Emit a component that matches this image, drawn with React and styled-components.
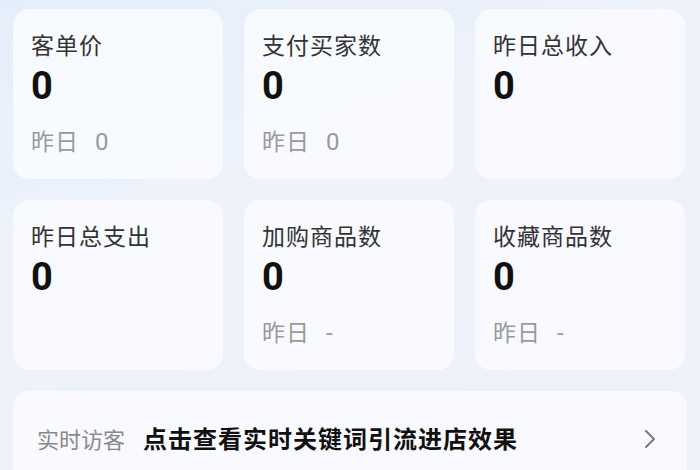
import React from 'react';
import styled, { createGlobalStyle } from 'styled-components';

const GlobalStyle = createGlobalStyle`
  html, body {
    margin: 0;
    padding: 0;
  }
  body {
    font-family: "Noto Sans CJK SC", "Noto Sans", sans-serif;
    background: #eef2fa;
  }
`;

const Page = styled.div`
  width: 700px;
  height: 470px;
  overflow: hidden;
  box-sizing: border-box;
  padding: 9px 13px 0 13px;
  background: linear-gradient(160deg, #e4eefb 0%, #edf2fb 35%, #eff1fa 100%);
`;

const Grid = styled.div`
  display: grid;
  grid-template-columns: repeat(3, 210px);
  grid-auto-rows: 170px;
  column-gap: 21px;
  row-gap: 21px;
`;

const Card = styled.div`
  background: rgba(249, 251, 255, 0.85);
  border-radius: 16px;
  padding: 21px 0 0 18px;
  box-sizing: border-box;
  display: flex;
  flex-direction: column;
`;

const Title = styled.div`
  font-size: 23px;
  line-height: 28px;
  color: #333;
  font-weight: 400;
  letter-spacing: 1px;
`;

const Value = styled.div`
  margin-top: 6px;
  font-family: Roboto, "Liberation Sans", sans-serif;
  font-size: 38px;
  line-height: 44px;
  font-weight: 700;
  color: #111;
`;

const Sub = styled.div`
  margin-top: 18px;
  font-size: 23px;
  line-height: 28px;
  color: #9a9a9a;
  letter-spacing: 1px;
  display: flex;
  align-items: baseline;
  gap: 16px;
  span:last-child {
    font-family: Roboto, "Liberation Sans", sans-serif;
    font-size: 24px;
  }
`;

const Banner = styled.div`
  margin-top: 21px;
  height: 100px;
  width: 674px;
  background: rgba(249, 251, 255, 0.9);
  border-radius: 16px;
  display: flex;
  align-items: flex-start;
  padding: 33px 30px 0 24px;
  box-sizing: border-box;
`;

const Label = styled.div`
  font-size: 22px;
  line-height: 28px;
  color: #8a8a8a;
  margin-right: 18px;
`;

const Link = styled.div`
  flex: 1;
  font-size: 24px;
  line-height: 28px;
  font-weight: 700;
  color: #111;
  letter-spacing: 1px;
`;

const Chevron = styled.svg`
  width: 14px;
  height: 20px;
  margin-top: 5px;
`;

const stats = [
  { title: '客单价', value: '0', sub: '0' },
  { title: '支付买家数', value: '0', sub: '0' },
  { title: '昨日总收入', value: '0' },
  { title: '昨日总支出', value: '0' },
  { title: '加购商品数', value: '0', sub: '-' },
  { title: '收藏商品数', value: '0', sub: '-' },
];

const App = () => (
  <>
    <GlobalStyle />
    <Page>
      <Grid>
        {stats.map(s => (
          <Card key={s.title}>
            <Title>{s.title}</Title>
            <Value>{s.value}</Value>
            {s.sub && (
              <Sub>
                <span>昨日</span>
                <span>{s.sub}</span>
              </Sub>
            )}
          </Card>
        ))}
      </Grid>
      <Banner>
        <Label>实时访客</Label>
        <Link>点击查看实时关键词引流进店效果</Link>
        <Chevron viewBox="0 0 14 20">
          <polyline
            points="3,2 11,10 3,18"
            fill="none"
            stroke="#7a7a7a"
            strokeWidth="2"
            strokeLinecap="round"
            strokeLinejoin="round"
          />
        </Chevron>
      </Banner>
    </Page>
  </>
);

export default App;
